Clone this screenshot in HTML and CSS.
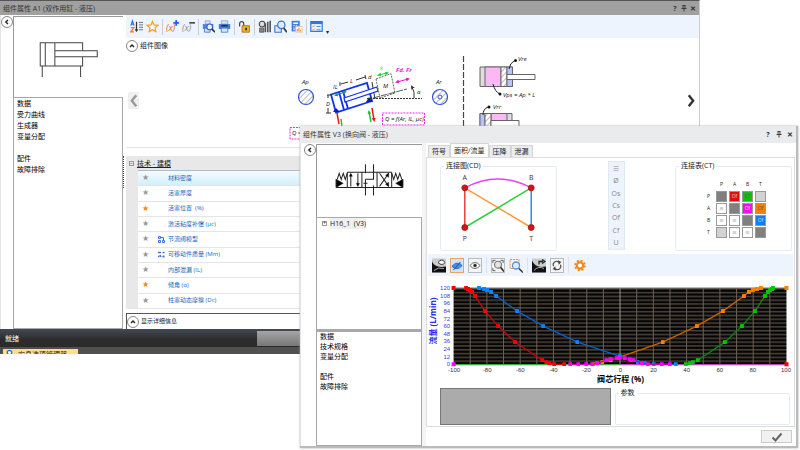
FILE: index.html
```html
<!DOCTYPE html>
<html lang="zh-CN">
<head>
  <meta charset="UTF-8" />
  <meta name="viewport" content="width=device-width,initial-scale=1.0" />
  <title>组件属性</title>
  <link rel="stylesheet" href="styles.css">
</head>
<body>
  <!-- A1: double acting cylinder -->
  <section class="window window-a1">
    <header class="titlebar">
      <h1>组件属性 A1 (双作用缸 - 液压)</h1>
      <button aria-label="帮助">?</button>
      <button aria-label="固定"><svg viewBox="0 0 6 7" width="6" height="7"><path d="M2 .5v3M4 .5v3M1.500 .5h3M.5 3.500h5M3 3.500v3" fill="none" stroke="#333" stroke-width=".9"/></svg></button>
      <button aria-label="关闭">✕</button>
    </header>

    <div class="window-body">
      <div class="rail"><button class="round" aria-label="收起"><svg viewBox="0 0 10 10"><path d="M6 3 3.800 5 6 7"/></svg></button></div>
      <aside class="side">
        <div class="symbol">
          <svg viewBox="14 17 108 79" fill="none" stroke="#444" stroke-width="1">
            <path d="M82 50.500v-8H40v23h42v-9M45 42.500v23M54.500 42.500v23M54.500 50.500h42v6h-42M42 65.500v11M80 65.500v11"/>
          </svg>
        </div>
        <nav class="list">
          <a href="#">数据</a>
          <a href="#">受力曲线</a>
          <a href="#">生成器</a>
          <a href="#">变量分配</a>
          <a href="#" class="spaced">配件</a>
          <a href="#">故障排除</a>
        </nav>
      </aside>
      <div class="splitter"></div>

      <main class="content">
        <div class="toolbar">
          <button aria-label="排序"><svg viewBox="0 0 16 16"><path d="m1 7 2-6 2 6M2 5h2" fill="none" stroke="#2f6fd0" stroke-width="1.400"/><path d="M1 9.500h4L1 14.500h4" fill="none" stroke="#ee7c2a" stroke-width="1.500"/><path d="M8 2v11M6.500 11.500l1.500 2 1.500-2" stroke="#333" stroke-width="1.500" fill="none"/><path d="M11 3h5M11 6h5M11 9h5M11 12h5" stroke="#555"/></svg></button>
          <button aria-label="收藏"><svg viewBox="0 0 16 16"><path d="m8 1.800 1.900 4.300 4.700.5-3.500 3.100 1 4.600L8 12l-4.100 2.300 1-4.600L1.400 6.600l4.700-.5z" fill="#fff8e6" stroke="#f5a01c" stroke-width="1.500"/></svg></button>
          <i class="sep"></i>
          <button aria-label="添加变量"><svg viewBox="0 0 16 16"><text x="0" y="14" font-size="11" font-style="italic" fill="#e8661c">(x)</text><path d="M12.500 0v7M9 3.500h7" stroke="#1d5fe0" stroke-width="2"/></svg></button>
          <button aria-label="删除变量"><svg viewBox="0 0 16 16"><text x="0" y="14" font-size="11" font-style="italic" fill="#8b8b8b">(x)</text><path d="M9 3.500h7" stroke="#444" stroke-width="2"/></svg></button>
          <i class="sep"></i>
          <button aria-label="打印预览"><svg viewBox="0 0 16 16"><path d="M4 1h6v4H4z" fill="#dde3ea" stroke="#8fa0b6"/><path d="M1 5h13v6H1z" fill="#4b86e6"/><path d="M3 10h7v5H3z" fill="#cfe0fa" stroke="#3a73d2"/><circle cx="9.500" cy="8.500" r="3.500" fill="#eaf4ff" stroke="#2c62c0" stroke-width="1.300"/><path d="m12 11 4 4" stroke="#333" stroke-width="2"/></svg></button>
          <button aria-label="打印"><svg viewBox="0 0 16 16"><path d="M4 1h8v4H4z" fill="#dde3ea" stroke="#8fa0b6"/><path d="M1 5h14v6H1z" fill="#3e7be0"/><path d="M4 6h8v2H4z" fill="#222c55"/><path d="M4 10h8v5H4z" fill="#dbe8fb" stroke="#3a73d2"/></svg></button>
          <i class="sep"></i>
          <button aria-label="解锁"><svg viewBox="0 0 16 16"><path d="M2 8V4.500a2.500 2.500 0 0 1 5 0V7" fill="none" stroke="#444" stroke-width="1.500"/><path d="M5 7h9v8H5z" fill="#f3b21d" stroke="#a36d05"/><path d="M9 9.500h2v3H9z" fill="#222"/></svg></button>
          <i class="sep"></i>
          <button aria-label="库"><svg viewBox="0 0 16 16"><circle cx="5" cy="5" r="3.500" fill="#ddd" stroke="#444" stroke-width="1.300"/><path d="M2 10h5v5H2z" fill="#888" stroke="#555"/><path d="M9 4v11M12 2v13M15 1v14" stroke="#555" stroke-width="2"/></svg></button>
          <button aria-label="查找"><svg viewBox="0 0 16 16"><path d="M1 7h6l2 2v6H1z" fill="#dbe8fb" stroke="#3a73d2" stroke-width="1.300"/><circle cx="9" cy="6" r="4.500" fill="#dcebff" stroke="#3a73d2" stroke-width="1.500"/><path d="m12 10 4 5" stroke="#333" stroke-width="2"/></svg></button>
          <button aria-label="计算"><svg viewBox="0 0 16 16"><path d="M2 1h10v13H2z" fill="#3e7be0"/><path d="M4 3h6v2H4z" fill="#fff"/><path d="M4 7h2M7 7h2M4 10h2M4 12h2" stroke="#fff"/><path d="M7 8h8v7H7z" fill="#fff" stroke="#e6bf9d"/><path d="M9 14v-3M11 14V9.500M13 14v-2" stroke="#f08020" stroke-width="1.300"/></svg></button>
          <i class="sep"></i>
          <button aria-label="选项"><svg viewBox="0 0 16 16"><path d="M1 2h14v12H1z" fill="#eaf3ff" stroke="#2f78dd" stroke-width="1.500"/><path d="M1 3.500h14" stroke="#2f78dd" stroke-width="3"/><path d="m3 7.500 1 1 2-2M3 11.500l1 1 2-2" fill="none" stroke="#f08020"/><path d="M8 8h5M8 12h5" stroke="#2f78dd"/></svg></button>
          <span class="more">▾</span>
        </div>

        <div class="section-title">
          <button class="round" aria-label="折叠"><svg viewBox="0 0 10 10"><path d="M3 6 5 4l2 2"/></svg></button>组件图像
        </div>

        <div class="carousel">
          <button class="prev" aria-label="上一个"><svg viewBox="0 0 10 16"><path d="M7.500 3 3.500 8l4 5" fill="none" stroke="#9a9a9a" stroke-width="2.200"/></svg></button>
          <svg class="diagram" viewBox="285 52 256 94">
            <defs>
              <pattern id="hatch" width="4" height="4" patternUnits="userSpaceOnUse" patternTransform="rotate(45)"><rect width="4" height="4" fill="#fff"/><path d="M0 0v4" stroke="#777"/></pattern>
              <marker id="arrow" viewBox="0 0 6 6" refX="3" refY="3" markerWidth="4" markerHeight="4" markerUnits="userSpaceOnUse" orient="auto-start-reverse"><path d="M0 0l6 3-6 3z" fill="context-stroke"/></marker>
            </defs>
            <circle cx="306" cy="96" r="7.500" fill="url(#hatch)" stroke="#2e50d8" stroke-width="1.200"/>
            <circle cx="440" cy="96" r="7.500" fill="url(#hatch)" stroke="#2e50d8" stroke-width="1.200"/>
            <circle cx="440" cy="96" r="2" fill="#fff" stroke="#2e50d8"/>
            <g fill="none" stroke="#1133e8" stroke-width="1.800">
              <path d="M331 93.500 367 82l5 18-36 11.700zM339 91l5 18M343 90l5 18"/>
              <path d="M344 97 377 86l1 4-33 11z" fill="#fff" stroke-width="1.300"/>
            </g>
            <path d="m333 111 3-4 4 4zM366 101l3-5 4 5z" fill="#0a22b0"/>
            <g fill="none" stroke="#333">
              <path d="M340 85v-4M341 83l7-2M356 79l9-3M365 74l1 4M327 94h4M328 94v3M328 107v5M326 112h5M372 81l1 6M374 92l1 6"/>
              <path d="M376 78l15-5.300L395 92l-15 5z" stroke="#666" stroke-dasharray="2 1" fill="#fff"/>
              <path d="M367 97.500h55" stroke-dasharray="2 1"/>
              <path d="M373 97l34-9" stroke-dasharray="7 1" stroke-width=".8"/>
              <path d="M412 86q3 5 2 11" marker-start="url(#arrow)"/>
              <path d="M463.500 55v71" stroke="#444" stroke-dasharray="6 2" stroke-width="1.200"/>
            </g>
            <path d="M336 94l9-3" stroke="#159b79" fill="none" marker-start="url(#arrow)" marker-end="url(#arrow)"/>
            <path d="M379 74l8-2" stroke="#18d83c" fill="none" marker-start="url(#arrow)" marker-end="url(#arrow)"/>
            <path d="M397 81l11-3" stroke="#ee15d5" fill="none" marker-start="url(#arrow)" marker-end="url(#arrow)"/>
            <g fill="none" stroke-width="1.500">
              <path d="M342 126l-1-8M371 121l-2-10" stroke="#18c83c" marker-end="url(#arrow)"/>
              <path d="M337 112l2 11M372 107l2 12" stroke="#ee1717" marker-end="url(#arrow)"/>
            </g>
            <g class="formula">
              <text x="302" y="83">Ap</text><text x="333" y="88">IL</text><text x="350" y="82">L</text>
              <text x="368" y="78">d</text><text x="326" y="105">D</text><text x="383" y="87">M</text>
              <text x="417" y="93">α</text><text x="436" y="83">Ar</text>
              <text x="380" y="69" fill="#18c83c">ẋ</text>
              <text x="396" y="71" class="force">Fd, Fr</text>
              <text x="385" y="120">Q = f(Ar, IL, μc)</text>
              <text x="292" y="134">Q =</text>
              <text x="518" y="60">Vre</text><text x="503" y="96">Vps = Ap * L</text><text x="493" y="108">Vrr</text>
            </g>
            <path d="M382.500 112h42v12h-42zM290 126.500h20V138h-20z" fill="none" stroke="#ee2ae0" stroke-dasharray="2 1"/>
            <g stroke="#666" stroke-width="1">
              <path d="M480 66h32.500v19.500H480z" fill="#ddd"/>
              <path d="M485 66h16v19.500h-16z" fill="#fbb9f3"/>
              <path d="M501 66h6v19.500h-6z" fill="url(#hatch)"/>
              <path d="M507 66h5.500v19.500H507z" fill="#b9c3fa"/>
              <path d="M507 73.500h28v5h-28z" fill="#fff"/>
              <path d="M480 126v-13.500h32v7h-32" fill="#ddd"/>
              <path d="M480 126v-13.500h5V126" fill="#b9c3fa"/>
              <path d="M491 112.500h16v7h-16z" fill="#fbb9f3"/>
              <path d="M485 126v-13.500h6V126" fill="url(#hatch)"/>
              <path d="M491 119.500h28v6h-28z" fill="#fff"/>
            </g>
            <g fill="none" stroke="#222">
              <path d="M509 68q1-6 5-8M493 83q2 8 7 10M483 114q0-6 5-8"/>
              <g fill="#111" stroke="none"><circle cx="515.500" cy="59.500" r="1.500"/><circle cx="500" cy="93" r="1.500"/><circle cx="489" cy="106" r="1.500"/></g>
            </g>
          </svg>
          <button class="next" aria-label="下一个"><svg viewBox="0 0 10 16"><path d="m2.500 3 4 5-4 5" fill="none" stroke="#333" stroke-width="2.200"/></svg></button>
        </div>

        <div class="props">
          <h2><span class="expander">−</span><u>技术 - 建模</u></h2>
          <ul>
            <li class="selected"><button class="star">★</button><span></span><a href="#">材料密度</a></li>
            <li><button class="star">★</button><span></span><a href="#">活塞厚度</a></li>
            <li><button class="star on">★</button><span></span><a href="#">活塞位置&nbsp; (%)</a></li>
            <li><button class="star">★</button><span></span><a href="#">激活粘度补偿 (μc)</a></li>
            <li><button class="star">★</button><span><svg viewBox="0 0 7 7"><path d="M.5.5h2v2h-2zM.5 4.500h2v2h-2zM4.500 4.500h2v2h-2zM3 1.500h2.500V4" fill="none" stroke="#3f6fdc"/></svg></span><a href="#">节流阀模型</a></li>
            <li><button class="star">★</button><span><svg viewBox="0 0 7 7"><path d="M0 1.500h3M4.500 1.500h2M0 5.500h1.500M2 4l1 2M4.500 5.500h2M5.500 4.500v2" fill="none" stroke="#3f6fdc" stroke-width="1.500"/></svg></span><a href="#">可移动件质量 (Mm)</a></li>
            <li><button class="star">★</button><span></span><a href="#">内部泄漏 (IL)</a></li>
            <li><button class="star on">★</button><span></span><a href="#">倾角 (α)</a></li>
            <li><button class="star">★</button><span></span><a href="#">柱塞动态摩擦 (Dc)</a></li>
          </ul>
        </div>

        <div class="details">
          <button class="round" aria-label="展开"><svg viewBox="0 0 10 10"><path d="M3 6 5 4l2 2"/></svg></button>显示详细信息
        </div>
      </main>
    </div>

    <footer class="status"><span>就绪</span><button aria-label="状态"></button></footer>
    <div class="taskbar"><a href="#"><svg viewBox="0 0 8 8" width="7" height="7"><circle cx="4" cy="4" r="2.500" fill="#fff" stroke="#2f6fd0" stroke-width="1.500"/></svg>安息选项管理器</a></div>
  </section>

  <!-- V3: directional valve -->
  <section class="window window-v3">
    <header class="titlebar">
      <h1>组件属性 V3 (换向阀 - 液压)</h1>
      <button aria-label="帮助">?</button>
      <button aria-label="固定"><svg viewBox="0 0 6 7" width="6" height="7"><path d="M2 .5v3M4 .5v3M1.500 .5h3M.5 3.500h5M3 3.500v3" fill="none" stroke="#333" stroke-width=".9"/></svg></button>
      <button aria-label="关闭">✕</button>
    </header>

    <div class="window-body">
      <div class="rail"><button class="round" aria-label="收起"><svg viewBox="0 0 10 10"><path d="M6 3 3.800 5 6 7"/></svg></button></div>
      <aside class="side">
        <div class="symbol">
          <svg viewBox="317 145 104 71" fill="none" stroke="#222" stroke-width="1">
            <path d="M336 187h66M347 172h44M347 172v15M361.500 172v15M376.500 172v15M391 172v15M350.500 186v-12M357.500 173v12M365 164v9M365 179v16M373 164v15h-8M373 185v10M363 183h4M379 173l9 13M388 173l-9 13"/>
            <path d="m337 179 2-6 2 6 2-6 2 6 2-6M391 173l2 6 2-6 2 6 2-6 2 6M336 179v8M402 179v8"/>
            <path d="m336 179 7 4-7 4zM402 179l-7 4 7 4zM349 176l1.500-3 1.500 3zM356 183l1.500 3 1.500-3zM385 175l3-2v4zM385 184l3 2v-4z" fill="#000" stroke-width=".5"/>
          </svg>
        </div>
        <div class="tree"><span class="expander">+</span><a href="#">H16_1&nbsp; (V3)</a></div>
        <nav class="list">
          <a href="#">数据</a>
          <a href="#">技术规格</a>
          <a href="#">变量分配</a>
          <a href="#" class="spaced">配件</a>
          <a href="#">故障排除</a>
        </nav>
      </aside>
      <div class="splitter"></div>

      <main class="content">
        <div class="tabs" role="tablist">
          <button role="tab">符号</button>
          <button role="tab" aria-selected="true" class="active">面积/流量</button>
          <button role="tab">压降</button>
          <button role="tab">泄漏</button>
        </div>

        <div class="tab-panel">
          <div class="connections">
            <fieldset>
              <legend>连接图(CD)</legend>
              <svg viewBox="441 172 116 76" fill="none" stroke-width="1.500">
                <path d="M465 189v40" stroke="#f23a3a"/>
                <path d="M532 189v40" stroke="#2f86f0"/>
                <path d="M465 189l67 40" stroke="#ff9a3c"/>
                <path d="M532 189l-67 40" stroke="#2fcf3a"/>
                <path d="M465 189q33-18 67 0" stroke="#f03cf0"/>
                <g fill="#e01010" stroke="#8e1515" stroke-width=".8"><circle cx="465" cy="189" r="3"/><circle cx="532" cy="189" r="3"/><circle cx="465" cy="229" r="3"/><circle cx="532" cy="229" r="3"/></g>
                <g class="ports"><text x="465" y="181">A</text><text x="532" y="181">B</text><text x="465" y="243">P</text><text x="532" y="243">T</text></g>
              </svg>
            </fieldset>

            <div class="types">
              <button>≡</button>
              <button>Ø</button>
              <button>Os</button>
              <button>Cs</button>
              <button>Of</button>
              <button>Cf</button>
              <button>U</button>
            </div>

            <fieldset>
              <legend>连接表(CT)</legend>
              <table>
                <tr><th></th><th>P</th><th>A</th><th>B</th><th>T</th></tr>
                <tr><th>P</th><td class="self"></td><td class="red">Of</td><td class="green">Cf</td><td class="off"></td></tr>
                <tr><th>A</th><td>≡</td><td class="self"></td><td class="magenta">Of</td><td class="orange">Of</td></tr>
                <tr><th>B</th><td>≡</td><td>≡</td><td class="self"></td><td class="blue">Of</td></tr>
                <tr><th>T</th><td class="off"></td><td>≡</td><td>≡</td><td class="self"></td></tr>
              </table>
            </fieldset>
          </div>

          <div class="toolbar">
            <button aria-label="曲线"><svg viewBox="0 0 14 14"><path d="M0 0h14v14H0z" fill="#ccc"/><path d="M0 3q3 7 14 5v6H0z" fill="#111"/><path d="M6 4q4-5 7 0-3 4-7 0z" fill="#fff" stroke="#333"/><path d="M2 12q4-4 10-2" stroke="#aaa" fill="none"/></svg></button>
            <button aria-label="隐藏" class="pressed"><svg viewBox="0 0 14 14"><path d="M1 8q6-7 12-1-6 7-12 1z" fill="#4b8fe8" stroke="#1e62c6"/><path d="m3 12 8-9" stroke="#1e62c6" stroke-width="1.300"/></svg></button>
            <button aria-label="显示" class="boxed"><svg viewBox="0 0 14 14"><path d="M1 7q6-7 12 0-6 7-12 0z" fill="#fff" stroke="#555"/><circle cx="7" cy="7" r="2" fill="#333"/></svg></button>
            <i class="sep"></i>
            <button aria-label="适合窗口" class="boxed"><svg viewBox="0 0 14 14"><path d="M1 4V1h3M10 1h3v3M1 10v3h3" fill="none" stroke="#444"/><circle cx="7" cy="6" r="4" fill="#e3e3e3" stroke="#777" stroke-width="1.300"/><path d="m10 9 4 5" stroke="#333" stroke-width="2"/></svg></button>
            <button aria-label="框选放大"><svg viewBox="0 0 14 14"><path d="M1 1h9v9H1z" fill="none" stroke="#f08a38" stroke-dasharray="2 1"/><circle cx="7" cy="7" r="3.500" fill="#dfeeff" stroke="#5b8fd8" stroke-width="1.300"/><path d="m10 10 4 4" stroke="#333" stroke-width="1.500"/></svg></button>
            <i class="sep"></i>
            <button aria-label="导出"><svg viewBox="0 0 14 14"><path d="M0 0h14v14H0z" fill="#ccc"/><path d="M0 2q3 8 14 6v6H0z" fill="#111"/><path d="M7 6V3h4M10 1l3 2-3 2" fill="none" stroke="#222" stroke-width="1.300"/><path d="M2 12q4-5 10-2" stroke="#aaa" fill="none"/></svg></button>
            <button aria-label="刷新" class="boxed"><svg viewBox="0 0 14 14"><path d="M3 8a4 4 0 0 1 6-5M11 6a4 4 0 0 1-6 5" fill="none" stroke="#444" stroke-width="1.200"/><path d="M8 1l4 2-3 3zM6 13l-4-2 3-3z" fill="#444"/></svg></button>
            <i class="sep"></i>
            <button aria-label="设置"><svg viewBox="0 0 14 14"><circle cx="7" cy="7" r="4.800" fill="none" stroke="#f08a1c" stroke-width="2" stroke-dasharray="2 1.770"/><circle cx="7" cy="7" r="3.200" fill="#fff" stroke="#f08a1c" stroke-width="2.200"/></svg></button>
          </div>

          <svg class="chart" viewBox="428 282 366 104">
            <defs>
              <pattern id="stripes" x="0" y="289" width="8" height="3.800" patternUnits="userSpaceOnUse"><rect width="8" height="3.800" fill="#050505"/><rect width="8" height="1.500" fill="#4a4238"/></pattern>
              <marker id="mRed" markerWidth="4" markerHeight="4" refX="2" refY="2" markerUnits="userSpaceOnUse"><path d="M0 0h4v4H0z" fill="#f00"/></marker>
              <marker id="mBlue" markerWidth="4" markerHeight="4" refX="2" refY="2" markerUnits="userSpaceOnUse"><path d="M0 0h4v4H0z" fill="#0a84ff"/></marker>
              <marker id="mOrange" markerWidth="4" markerHeight="4" refX="2" refY="2" markerUnits="userSpaceOnUse"><path d="M0 0h4v4H0z" fill="#ff7f00"/></marker>
              <marker id="mGreen" markerWidth="4" markerHeight="4" refX="2" refY="2" markerUnits="userSpaceOnUse"><path d="M0 0h4v4H0z" fill="#00c800"/></marker>
              <marker id="mMagenta" markerWidth="4" markerHeight="4" refX="2" refY="2" markerUnits="userSpaceOnUse"><path d="M0 0h4v4H0z" fill="#ff00ff"/></marker>
            </defs>
            <rect x="454.500" y="289" width="332" height="76" fill="url(#stripes)"/>
            <path d="M471.100 289v76M487.700 289v76M504.300 289v76M520.900 289v76M537.500 289v76M554.100 289v76M570.700 289v76M587.300 289v76M603.900 289v76M637.100 289v76M653.700 289v76M670.300 289v76M686.900 289v76M703.500 289v76M720.100 289v76M736.700 289v76M753.300 289v76M769.900 289v76" stroke="#6e6154" stroke-width="1"/>
            <path d="M620.500 289v76" stroke="#999"/>
            <path d="M454.500 289h332" stroke="#777"/>
            <path d="M454.500 365.500h166" stroke="#0a9a1a"/>
            <path d="M620.500 365.500h166" stroke="#b01cb0"/>
            <g fill="none" stroke-width="1.300">
              <polyline class="green" points="773,289 772,290 770,291 768,293 765,297 755,312 742,327 725,343 698,361 693,363 690,364 686,365"/>
              <polyline class="orange" points="761,289 757,290 753,291 749,293 744,297 723,312 697,327 663,343 620,358 611,361 603,363 598,364 594,365"/>
              <polyline class="blue" points="480,289 485,290 488,291 492,293 497,297 518,312 544,327 578,343 620,357 631,361 638,363 645,364 654,365 676,365"/>
              <polyline class="red" points="467,289 469,290 471,291 473,293 476,297 486,312 499,327 516,343 543,361 547,363 550,364 555,365 565,365"/>
              <polyline class="magenta" points="571,365 579,365 587,365 593,365 598,364 607,361 611,360 617,359 620,359 625,359 630,360 634,361 642,364 648,365 662,365 670,365"/>
            </g>
            <path d="M452.500 287h4v4h-4zM784.500 363h4v4h-4z" fill="#f00"/>
            <path d="M784.500 287h4v4h-4z" fill="#ff7f00"/>
            <path d="M452.500 363h4v4h-4z" fill="#f0f"/>
            <g class="y-labels">
              <text x="451" y="291">120</text><text x="451" y="299">108</text><text x="451" y="306">96</text><text x="451" y="314">84</text><text x="451" y="322">72</text><text x="451" y="329">60</text><text x="451" y="337">48</text><text x="451" y="344">36</text><text x="451" y="352">24</text><text x="451" y="360">12</text><text x="451" y="367">0</text>
            </g>
            <g class="x-labels">
              <text x="455" y="373">-100</text><text x="488" y="373">-80</text><text x="521" y="373">-60</text><text x="554" y="373">-40</text><text x="587" y="373">-20</text><text x="621" y="373">0</text><text x="654" y="373">20</text><text x="687" y="373">40</text><text x="720" y="373">60</text><text x="753" y="373">80</text><text x="786" y="373">100</text>
            </g>
            <text class="axis y-axis" transform="translate(437 322) rotate(-90)">流量 (L/min)</text>
            <text class="axis" x="621" y="383">阀芯行程 (%)</text>
          </svg>

          <div class="params">
            <div class="preview"></div>
            <fieldset><legend>参数</legend></fieldset>
          </div>
        </div>

        <div class="actions"><button aria-label="确定"><svg viewBox="0 0 12 10" width="12" height="10"><path d="m1.500 5.500 3 3 6-7" fill="none" stroke="#666" stroke-width="2"/></svg></button></div>
      </main>
    </div>
  </section>
</body>
</html>
```

FILE: styles.css
```css
* { box-sizing: border-box; margin: 0; padding: 0; }
html, body { width: 100%; height: 100%; }
body {
  position: relative;
  overflow: hidden;
  background: #fff;
  color: #222;
  font: 7px/11px "Open Sans", "Noto Sans CJK SC", sans-serif;
}
button {
  border: none;
  background: none;
  color: inherit;
  font: inherit;
  cursor: pointer;
}
a { color: inherit; text-decoration: none; }
svg { display: block; }
ul { list-style: none; }

/* windows */
.window {
  position: absolute;
  display: flex;
  flex-direction: column;
  background: #fff;
}
.window-a1 {
  top: 0; left: 0; right: 12.5%; bottom: 96px;
  border-top: 1px solid #555;
  border-right: 1px solid #ccc;
}
.window-v3 {
  top: 28%; left: 37.5%; right: 2px; bottom: 2px;
  border-right: 2px solid #bbb;
  border-bottom: 2px solid #bbb;
  box-shadow: 0 0 2px #aaa;
}
.titlebar {
  display: flex;
  align-items: center;
  gap: 3px;
  padding: 0 3px;
  height: 14px;
  background: #9fa09f;
}
.titlebar h1 { flex: 1; font-size: 7px; font-weight: normal; color: #333; }
.titlebar button {
  display: flex;
  justify-content: center;
  width: 6px;
  font-size: 7px;
  font-weight: bold;
  color: #333;
}
.window-v3 .titlebar { height: 17px; background: #e9ebec; gap: 5px; }
.window-body { flex: 1; display: flex; min-height: 0; }

.rail { width: 13px; padding-top: 1px; border-left: 1px solid #e4e4e4; }
.round {
  width: 12px;
  height: 12px;
  flex: none;
  border: 1px solid #888;
  border-radius: 50%;
  background: #fff;
}
.round path { fill: none; stroke: #222; stroke-width: 1.4; }
.side { width: 110px; display: flex; flex-direction: column; padding-top: 1px; }
.symbol { height: 81px; border: 1px solid #999; border-width: 1px 0 0 1px; }
.list {
  flex: 1;
  display: flex;
  flex-direction: column;
  padding: 0 3px;
  border: 1px solid #a5a8ae;
  color: #000;
}
.list .spaced { margin-top: 11px; }
.splitter { width: 3px; }
.window-a1 .splitter {
  margin: 141px 0;
  border-left: 1px dotted #444;
}
.content { flex: 1; min-width: 0; display: flex; flex-direction: column; }

.window-v3 .rail { width: 16px; padding: 1px 0 0 3px; }
.window-v3 .side { width: 106px; }
.window-v3 .symbol { height: 73px; }
.window-v3 .list { line-height: 10px; flex: none; height: 116px; border-top-width: 2px; }
.window-v3 .list .spaced { margin-top: 10px; }
.window-v3 .splitter { width: 4px; background: #f4f4f4; }
.tree {
  flex: 1;
  display: flex;
  align-items: flex-start;
  gap: 3px;
  padding: 0 5px;
  border: 1px solid #a5a8ae;
}
.tree a { background: #f0f0f0; }
.expander {
  width: 5px;
  height: 5px;
  border: 1px solid #999;
  font-size: 5px;
  line-height: 3px;
  text-align: center;
}
.tree .expander { margin-top: 3px; }

/* toolbars */
.toolbar { display: flex; align-items: center; background: #edf4fd; }
.toolbar svg { width: 100%; height: 100%; }
.window-a1 .toolbar { height: 23px; gap: 3px; padding: 0 4px; }
.window-a1 .toolbar button { width: 13px; height: 15px; }
.sep { width: 1px; height: 16px; background: #c9ced6; }
.more { align-self: flex-end; font-size: 6px; }

.section-title, .details {
  display: flex;
  align-items: center;
  gap: 2px;
  height: 16px;
}
.section-title { height: 15px; }
.carousel {
  height: 95px;
  display: flex;
  align-items: center;
  justify-content: space-between;
  padding: 0 2px;
  border-bottom: 1px solid #e2e2e2;
}
.prev, .next { width: 11px; height: 17px; }
.prev { background: #f0f0f0; }
.diagram { width: 256px; height: 94px; overflow: visible; }
.formula { font-size: 6px; font-style: italic; fill: #111; }
.force { font-weight: bold; fill: #ee15d5; }

/* property list */
.props {
  flex: 1;
  display: flex;
  flex-direction: column;
  margin-top: 8px;
  padding-left: 12px;
  background: #e8e8e8;
}
.props h2 {
  display: flex;
  align-items: center;
  gap: 3px;
  height: 14px;
  margin-left: -9px;
  font-size: 7px;
  font-weight: normal;
}
.props ul {
  flex: 1;
  display: flex;
  flex-direction: column;
  border-top: 1px solid #a9bdcc;
  background: #fff;
}
.props li {
  flex: 1;
  display: flex;
  align-items: center;
  border-bottom: 1px solid #e3e6e8;
  color: #1a6bc0;
  font-size: 6px;
}
.props li.selected { background: linear-gradient(#f4fcff, #d3effb); }
.props li span { width: 15px; padding-left: 5px; }
.props li svg { width: 7px; height: 7px; }
.star { width: 15px; color: #999; font: 8px/8px "DejaVu Sans", sans-serif; }
.star.on { color: #f0891a; }
.details {
  margin-top: 4px;
  border: 1px solid #555;
  border-width: 1px 0 0 1px;
  font-size: 6px;
}

.status {
  display: flex;
  align-items: center;
  height: 18px;
  padding-left: 5px;
  background: linear-gradient(#444a55, #2b2b2b 60%);
  color: #fff;
}
.status span { width: 252px; }
.status button {
  flex: 1;
  height: 15px;
  background: linear-gradient(#a5a5a5, #777);
}
.taskbar { height: 7px; padding: 2px 3px 0; background: #505050; overflow: hidden; }
.taskbar a {
  display: flex;
  gap: 5px;
  width: 75px;
  padding-left: 3px;
  background: #ffdf84;
}

/* tabs */
.tabs { display: flex; align-items: flex-end; height: 14px; padding-left: 2px; }
.tabs button {
  height: 12px;
  padding: 0 3px;
  border: 1px solid #d5d5d5;
  border-bottom: none;
  background: #ececec;
}
.tabs .active { height: 14px; background: #fff; }
.tab-panel {
  flex: 1;
  display: flex;
  flex-direction: column;
  margin-right: 1px;
  border: 1px solid #ddd;
}
fieldset {
  min-width: 0;
  border: 1px solid #e3edf0;
  border-radius: 2px;
}
legend { margin-left: 3px; padding: 0 2px; line-height: 10px; }

.connections {
  display: flex;
  justify-content: space-between;
  height: 94px;
  padding: 3px 2px 0 13px;
}
.connections fieldset { width: 117px; height: 90px; }
.ports { font-size: 7px; text-anchor: middle; fill: #333; stroke: none; }
.types {
  display: flex;
  flex-direction: column;
  width: 17px;
  height: 89px;
  border: 1px solid #dfe9f5;
  background: #edf4fd;
  color: #888;
}
.types button { flex: 1; }
table {
  margin: 7px 0 0 25px;
  border-collapse: separate;
  border-spacing: 2px 1px;
  font-size: 5px;
  line-height: 9px;
  text-align: center;
}
th { width: 11px; height: 11px; font-weight: normal; }
td { width: 11px; height: 11px; border: 1px solid #999; color: #555; }
.self { background: #808080; }
.off { background: #d2d2d2; }
td.red { background: #e00f0f; color: #fcc; }
td.green { background: #10bf10; }
td.magenta { background: #f010f0; color: #fdf; }
td.orange { background: #f08010; }
td.blue { background: #1080f0; color: #cde; }

.window-v3 .toolbar { height: 22px; gap: 4px; margin: 2px 1px 0; padding: 0 4px; }
.window-v3 .toolbar button { width: 14px; height: 15px; }
.window-v3 .toolbar .sep { background: #dde3ea; }
.toolbar .pressed { background: #cfe3fb; border: 1px solid #e8a268; }
.toolbar .boxed { border: 1px solid #bbb; background: #f4f4f4; }

/* chart */
.chart { width: 100%; margin-top: 5px; }
.chart .red { stroke: #d40000; marker: url(#mRed); }
.chart .blue { stroke: #0b62c4; marker: url(#mBlue); }
.chart .orange { stroke: #c86400; marker: url(#mOrange); }
.chart .green { stroke: #0a8a14; marker: url(#mGreen); }
.chart .magenta { stroke: #c000c0; marker: url(#mMagenta); }
.y-labels, .x-labels { font: 6px "Liberation Sans", sans-serif; }
.y-labels { text-anchor: end; fill: #3a3af0; }
.x-labels { text-anchor: middle; fill: #333; }
.axis { font-size: 8px; font-weight: bold; text-anchor: middle; }
.y-axis { fill: #2a2af0; }

.params { flex: 1; display: flex; gap: 4px; padding: 3px 4px 1px 13px; }
.preview { flex: 171; border: 1px solid #777; background: #ababab; }
.params fieldset { flex: 176; }
.actions { display: flex; justify-content: flex-end; padding: 3px 4px; }
.actions button {
  display: flex;
  align-items: center;
  justify-content: center;
  width: 31px;
  height: 13px;
  border: 1px solid #ccc;
  background: #f1f1f1;
}
```
